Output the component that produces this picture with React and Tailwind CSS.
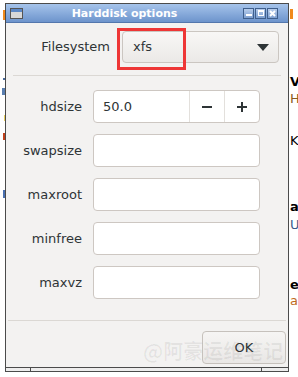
import React from 'react';

const font = { fontFamily: '"DejaVu Sans", "Liberation Sans", sans-serif' };

function Field({ label, children }) {
  return (
    <div className="flex items-center gap-[11px] mt-[11px] first:mt-[14px]">
      <div className="w-[76px] text-right text-[13px] text-[#2e3436]">{label}</div>
      {children}
    </div>
  );
}

function Entry() {
  return <div className="w-[167px] h-[33px] bg-white border border-[#cdc7c2] rounded-[4px]" />;
}

function TitleButton({ children }) {
  return (
    <div className="w-[11px] h-[11px] border border-[#3f5f8c] bg-gradient-to-b from-[#b7cdec] to-[#7d9fd0] flex items-center justify-center">
      {children}
    </div>
  );
}

export default function App() {
  return (
    <div className="w-[298px] h-[377px] bg-white flex overflow-hidden" style={font}>
      {/* background page peeking out on the left */}
      <div className="w-[5px] shrink-0 flex flex-col items-end overflow-hidden">
        <div className="mt-[10px] w-[2px] h-[10px] bg-[#f08a1c]" />
        <div className="mt-[58px] w-[2px] h-[2px] bg-[#4a6a9a]" />
        <div className="mt-[8px] w-[3px] h-[7px] bg-[#5a7fb0]" />
        <div className="mt-[20px] w-[1px] h-[6px] bg-[#e8d060]" />
        <div className="mt-[12px] w-[2px] h-[7px] bg-[#c0401a]" />
        <div className="mt-[50px] w-[2px] h-[8px] bg-[#4a70b0]" />
      </div>

      {/* dialog window */}
      <div className="w-[284px] h-[369px] mt-[3px] shrink-0 border border-[#4b4b4b] flex flex-col">
        <div className="h-[19px] shrink-0 bg-gradient-to-b from-[#a6c4eb] to-[#6d94cc] border-b border-[#5377ad] flex items-center relative">
          <div className="ml-[4px] w-[13px] h-[11px] border border-[#555] bg-[#d8d8d8] flex flex-col">
            <div className="h-[3px] bg-[#5c88c6]" />
          </div>
          <div className="flex-1 text-center text-white font-bold text-[11px] leading-none -ml-[17px]">
            Harddisk options
          </div>
          <div className="flex gap-[1px] mr-[10px]">
            <TitleButton>
              <div className="w-[6px] h-[2px] bg-white mt-[4px]" />
            </TitleButton>
            <TitleButton>
              <div className="w-[6px] h-[6px] border border-white border-t-2" />
            </TitleButton>
            <TitleButton>
              <svg width="7" height="7" viewBox="0 0 7 7">
                <path d="M1 1L6 6M6 1L1 6" stroke="white" strokeWidth="2" />
              </svg>
            </TitleButton>
          </div>
        </div>

        <div className="flex-1 bg-[#f3f2f1] relative flex flex-col">
          <div className="flex items-center gap-[12px] mt-[8px]">
            <div className="w-[104px] text-right text-[13px] text-[#2e3436]">Filesystem</div>
            <div className="w-[157px] h-[32px] rounded-[4px] border border-[#cbc6c1] bg-gradient-to-b from-[#f8f7f6] to-[#ebe9e7] flex items-center pl-[10px] pr-[9px] text-[13px] text-[#2e3436]">
              <span className="flex-1">xfs</span>
              <svg width="12" height="7" viewBox="0 0 12 7">
                <path d="M0 0H12L6 7Z" fill="#2e3436" />
              </svg>
            </div>
          </div>
          <div className="absolute left-[111px] top-[5px] w-[69px] h-[42px] border-[3px] border-[#ee3636]" />

          <div className="mt-[12px] ml-[7px] w-[268px] h-px bg-[#dbd8d4]" />

          <div className="flex flex-col">
            <Field label="hdsize">
              <div className="w-[167px] h-[33px] bg-white border border-[#cdc7c2] rounded-[4px] flex text-[13px] text-[#2e3436]">
                <div className="flex-1 flex items-center pl-[9px]">50.0</div>
                <div className="w-[35px] border-l border-[#e3e0dc] flex items-center justify-center">
                  <div className="w-[10px] h-[2px] bg-[#2e3436]" />
                </div>
                <div className="w-[35px] border-l border-[#e3e0dc] flex items-center justify-center">
                  <svg width="10" height="10" viewBox="0 0 10 10">
                    <path d="M0 5H10M5 0V10" stroke="#2e3436" strokeWidth="2" />
                  </svg>
                </div>
              </div>
            </Field>
            <Field label="swapsize"><Entry /></Field>
            <Field label="maxroot"><Entry /></Field>
            <Field label="minfree"><Entry /></Field>
            <Field label="maxvz"><Entry /></Field>
          </div>

          <div className="mt-[21px] ml-[2px] w-[278px] h-px bg-[#dbd8d4]" />

          <div className="flex justify-end mt-[10px] mr-[2px]">
            <div className="w-[84px] h-[33px] rounded-[4px] border border-[#c6c1bc] bg-gradient-to-b from-[#f6f5f4] to-[#e9e7e5] flex items-center justify-center text-[13px] text-[#2e3436]">
              OK
            </div>
          </div>

          <div
            className="absolute left-[137px] top-[313px] text-[20px] font-bold text-black/[0.06] pointer-events-none whitespace-nowrap"
            style={{ fontFamily: '"Noto Sans CJK SC", "DejaVu Sans", sans-serif' }}
          >
            @阿豪运维笔记
          </div>
        </div>

        <div className="h-[4px] shrink-0 border-t border-[#4b4b4b] bg-[#ededed] flex">
          <div className="w-[25px] border-r border-[#4b4b4b]" />
          <div className="w-[231px] border-r border-[#4b4b4b]" />
        </div>
      </div>

      {/* background page peeking out on the right */}
      <div className="flex-1 flex flex-col overflow-hidden text-[13px] leading-none pl-[1px]">
        <div className="mt-[9px] w-[3px] h-[10px] bg-[#f08a1c]" />
        <div className="mt-[56px] font-bold text-black">V</div>
        <div className="mt-[4px] text-[#8a5a20]">H</div>
        <div className="mt-[29px] text-black">K</div>
        <div className="mt-[53px] font-bold text-black">a</div>
        <div className="mt-[5px] text-[#3a5a8a]">U</div>
        <div className="mt-[47px] font-bold text-black">e</div>
        <div className="mt-[3px] text-[#c06a20]">a</div>
      </div>
    </div>
  );
}
